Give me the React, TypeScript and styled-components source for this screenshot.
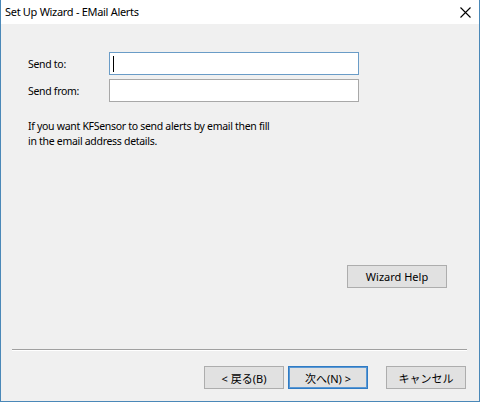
import React from 'react';
import styled, { createGlobalStyle } from 'styled-components';

const GlobalStyle = createGlobalStyle`
  html, body {
    margin: 0;
    padding: 0;
    background: #f0f0f0;
  }
  body {
    font-family: "Segoe UI", "Noto Sans", "Noto Sans CJK JP", sans-serif;
    font-size: 10.5px;
    letter-spacing: -0.3px;
    color: #000;
  }
`;

const CloseIcon = () => (
  <svg width="11" height="11" viewBox="0 0 11 11">
    <path d="M0.5 0.5 L10.5 10.5 M10.5 0.5 L0.5 10.5" stroke="#000" strokeWidth="1.1" fill="none" />
  </svg>
);

export default function App() {
  return (
    <>
      <GlobalStyle />
      <Window>
        <TitleBar>
          <Title>Set Up Wizard - EMail Alerts</Title>
          <CloseButton type="button">
            <CloseIcon />
          </CloseButton>
        </TitleBar>
        <Body>
          <Form>
            <Label>Send to:</Label>
            <TextField focused>
              <Caret />
            </TextField>
            <Label>Send from:</Label>
            <TextField />
          </Form>
          <Hint>
            If you want KFSensor to send alerts by email then fill
            <br />
            in the email address details.
          </Hint>
          <HelpRow>
            <Button type="button" width={100}>Wizard Help</Button>
          </HelpRow>
          <Separator />
          <Footer>
            <Button type="button">&lt; 戻る(B)</Button>
            <Button type="button" primary>次へ(N) &gt;</Button>
            <Button type="button" spaced>キャンセル</Button>
          </Footer>
        </Body>
      </Window>
    </>
  );
}

const Window = styled.div`
  box-sizing: border-box;
  width: 480px;
  height: 402px;
  display: flex;
  flex-direction: column;
  border: 1px solid #4a88b8;
  border-top: none;
  background: #f0f0f0;
`;

const TitleBar = styled.div`
  height: 24px;
  display: flex;
  align-items: center;
  justify-content: space-between;
  background: #fff;
  padding: 0 0 0 4px;
`;

const Title = styled.span`
  font-size: 11px;
  line-height: 24px;
`;

const CloseButton = styled.button`
  width: 28px;
  height: 24px;
  border: none;
  background: transparent;
  display: flex;
  align-items: center;
  justify-content: center;
  padding: 0;
`;

const Body = styled.div`
  flex: 1;
  display: flex;
  flex-direction: column;
  padding: 28px 0 12px;
`;

const Form = styled.div`
  display: grid;
  grid-template-columns: 81px 250px;
  grid-auto-rows: 23px;
  row-gap: 4px;
  align-items: center;
  padding-left: 27px;
`;

const Label = styled.span`
  line-height: 16px;
`;

const TextField = styled.div<{ focused?: boolean }>`
  box-sizing: border-box;
  height: 23px;
  display: flex;
  align-items: center;
  padding-left: 3px;
  background: #fff;
  border: 1px solid ${({ focused }) => (focused ? '#6a9cc7' : '#a8a8a8')};
`;

const Caret = styled.span`
  width: 1px;
  height: 16px;
  background: #000;
`;

const Hint = styled.p`
  margin: 17px 0 0 27px;
  line-height: 15px;
`;

const HelpRow = styled.div`
  margin-top: auto;
  display: flex;
  justify-content: flex-end;
  padding-right: 32px;
`;

const Button = styled.button<{ width?: number; primary?: boolean; spaced?: boolean }>`
  box-sizing: border-box;
  width: ${({ width }) => width ?? 80}px;
  height: 23px;
  padding: 0;
  font-family: inherit;
  font-size: 11px;
  letter-spacing: 0;
  color: #000;
  background: #e1e1e1;
  border: 1px solid ${({ primary }) => (primary ? '#2f7bc4' : '#adadad')};
  box-shadow: ${({ primary }) => (primary ? 'inset 0 0 0 1px #5a98d4' : 'none')};
  margin-left: ${({ spaced }) => (spaced ? '14px' : '0')};
`;

const Separator = styled.div`
  height: 1px;
  margin: 61px 12px 0 11px;
  background: #a0a0a0;
  border-bottom: 1px solid #fff;
`;

const Footer = styled.div`
  display: flex;
  justify-content: flex-end;
  gap: 4px;
  margin-top: 15px;
  padding-right: 13px;
`;
